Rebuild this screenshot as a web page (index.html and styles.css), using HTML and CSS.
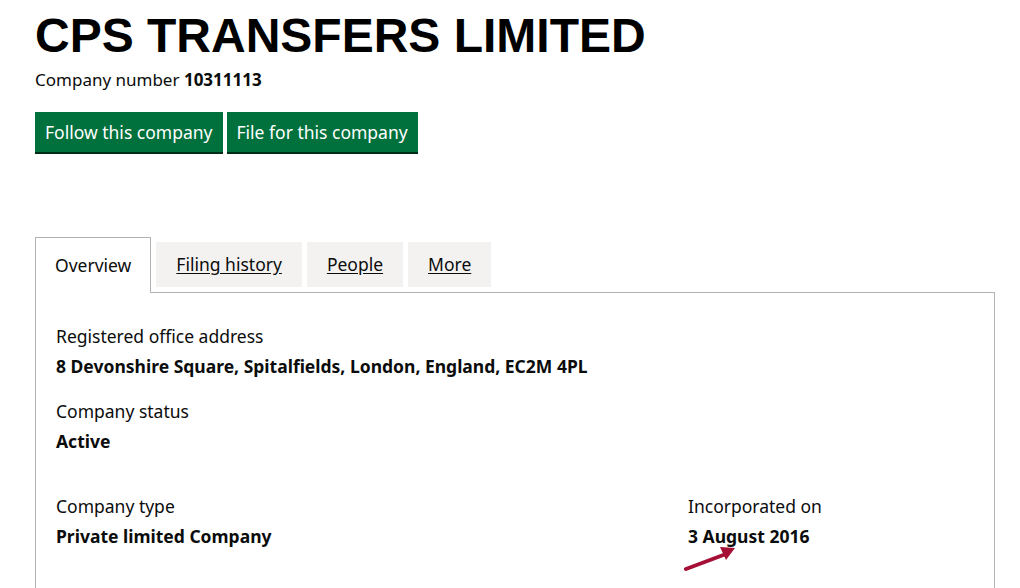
FILE: index.html
```html
<!DOCTYPE html>
<html lang="en">
<head>
<meta charset="utf-8">
<title>CPS TRANSFERS LIMITED</title>
<link rel="stylesheet" href="styles.css">
</head>
<body>
<main class="page">
  <h1 class="title">CPS TRANSFERS LIMITED</h1>
  <p class="number">Company number <strong>10311113</strong></p>
  <div class="actions">
    <a class="button" href="#">Follow this company</a>
    <a class="button" href="#">File for this company</a>
  </div>
  <nav class="tabs">
    <span class="tab tab-active">Overview</span>
    <a class="tab" href="#">Filing history</a>
    <a class="tab" href="#">People</a>
    <a class="tab" href="#">More</a>
  </nav>
  <section class="panel">
    <dl class="field">
      <dt>Registered office address</dt>
      <dd>8 Devonshire Square, Spitalfields, London, England, EC2M 4PL</dd>
    </dl>
    <dl class="field">
      <dt>Company status</dt>
      <dd>Active</dd>
    </dl>
    <div class="row">
      <dl class="field col">
        <dt>Company type</dt>
        <dd>Private limited Company</dd>
      </dl>
      <dl class="field col">
        <dt>Incorporated on</dt>
        <dd>3 August 2016</dd>
      </dl>
    </div>
  </section>
  <svg class="arrow" width="60" height="30" viewBox="0 0 60 30" aria-hidden="true">
    <line x1="2" y1="24" x2="42" y2="9" stroke="#a50f36" stroke-width="4" stroke-linecap="round"/>
    <polygon points="51,3 36,2 42,15" fill="#a50f36"/>
  </svg>
</main>
</body>
</html>
```

FILE: styles.css
```css
html, body {
  margin: 0;
  padding: 0;
  background: #fff;
}
body {
  font-family: "Noto Sans", "Open Sans", sans-serif;
  color: #0b0c0c;
}
.page {
  position: relative;
  padding: 0 25px 0 35px;
  height: 588px;
  overflow: hidden;
}
.title {
  font-family: "Liberation Sans", Arial, sans-serif;
  font-weight: 700;
  font-size: 48px;
  line-height: 1;
  margin: 0;
  padding-top: 12px;
  color: #000;
}
.number {
  margin: 8px 0 0;
  font-size: 17px;
  line-height: 24px;
}
.number strong {
  font-weight: 700;
}
.actions {
  display: flex;
  gap: 4px;
  margin-top: 20px;
}
.button {
  display: block;
  background: #00703c;
  color: #fff;
  text-decoration: none;
  font-size: 17.5px;
  line-height: 20px;
  padding: 10px 10px;
  box-shadow: 0 2px 0 #002d18;
}
.tabs {
  display: flex;
  align-items: flex-start;
  gap: 5px;
  margin-top: 85px;
  position: relative;
  z-index: 1;
}
.tab {
  display: block;
  background: #f3f2f1;
  color: #0b0c0c;
  font-size: 17.5px;
  line-height: 21px;
  padding: 12px 20px;
  margin-top: 5px;
  text-decoration: underline;
  text-underline-offset: 2px;
}
.tab-active {
  background: #fff;
  text-decoration: none;
  border: 1px solid #b1b4b6;
  border-bottom: 0;
  margin-top: 0;
  padding: 17px 19px 17px;
}
.panel {
  border: 1px solid #b1b4b6;
  margin-top: -1px;
  padding: 28px 20px 0;
  height: 400px;
}
.field {
  margin: 0 0 15px;
}
.field dt {
  font-size: 17.5px;
  line-height: 30px;
}
.field dd {
  margin: 0;
  font-size: 17.5px;
  line-height: 30px;
  font-weight: 700;
}
.row {
  display: grid;
  grid-template-columns: 632px 1fr;
  margin-top: 35px;
}
.arrow {
  position: absolute;
  left: 684px;
  top: 545px;
}
```
